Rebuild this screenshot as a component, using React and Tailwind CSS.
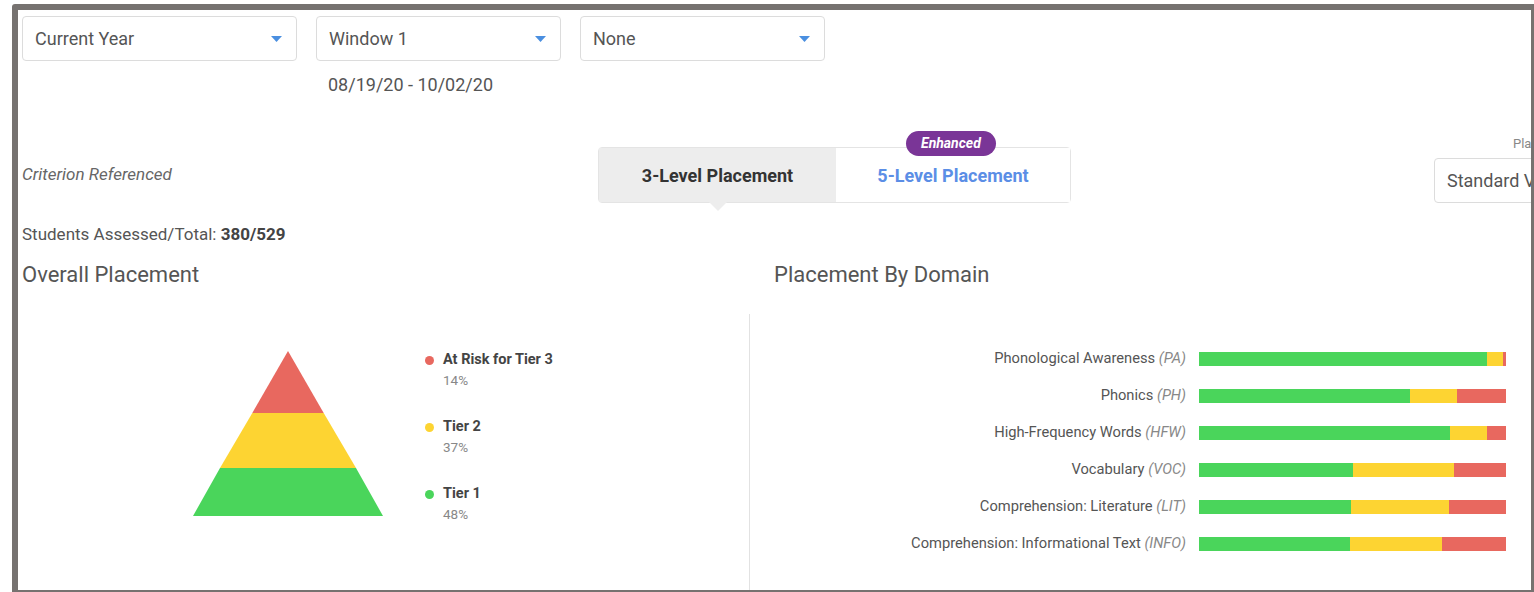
const DOMAINS = [
  { name: 'Phonological Awareness', code: 'PA', tiers: [93.8, 5.2, 1.0] },
  { name: 'Phonics', code: 'PH', tiers: [68.7, 15.3, 16.0] },
  { name: 'High-Frequency Words', code: 'HFW', tiers: [81.8, 12.0, 6.2] },
  { name: 'Vocabulary', code: 'VOC', tiers: [50.2, 32.9, 16.9] },
  { name: 'Comprehension: Literature', code: 'LIT', tiers: [49.5, 32.0, 18.5] },
  { name: 'Comprehension: Informational Text', code: 'INFO', tiers: [49.2, 30.0, 20.8] },
];

const LEGEND = [
  { label: 'At Risk for Tier 3', pct: '14%', dot: 'bg-[#e8685f]' },
  { label: 'Tier 2', pct: '37%', dot: 'bg-[#fdd432]' },
  { label: 'Tier 1', pct: '48%', dot: 'bg-[#4ad55b]' },
];

const TIER_COLORS = ['bg-[#4ad55b]', 'bg-[#fdd432]', 'bg-[#e8685f]'];

function Caret() {
  return (
    <svg width="11" height="6" viewBox="0 0 11 6" className="shrink-0">
      <path d="M0 0h11L5.5 6z" fill="#4a8fe0" />
    </svg>
  );
}

function Select({ label, width }) {
  return (
    <div className={`${width} h-[45px] shrink-0 flex items-center justify-between pl-[12px] pr-[14px] border border-[#dcdcdc] rounded-[4px] bg-white`}>
      <span className="text-[18px] text-[#555]">{label}</span>
      <Caret />
    </div>
  );
}

function Pyramid() {
  // apex at top, three stacked bands
  return (
    <svg width="190" height="165" viewBox="0 0 190 165" className="shrink-0">
      <polygon points="95,0 130.7,62 59.3,62" fill="#e8685f" />
      <polygon points="59.3,62 130.7,62 163,117 27,117" fill="#fdd432" />
      <polygon points="27,117 163,117 190,165 0,165" fill="#4ad55b" />
    </svg>
  );
}

export default function App() {
  return (
    <div className="w-[1534px] h-[592px] bg-white pt-[4px] pl-[12px] overflow-hidden" style={{ fontFamily: "Roboto, 'Liberation Sans', sans-serif" }}>
      <div className="h-[588px] border-[#767270] border-l-[6px] border-t-[6px] border-r-[3px] border-b-[2px] rounded-tl-[3px] overflow-hidden bg-white">
        <div className="w-[1513px] h-full overflow-hidden pl-[4px] pt-[6px]">
          {/* filters */}
          <div className="flex gap-[19px]">
            <Select label="Current Year" width="w-[275px]" />
            <div className="flex flex-col">
              <Select label="Window 1" width="w-[245px]" />
              <span className="mt-[13px] pl-[12px] text-[18px] leading-[22px] text-[#555]">08/19/20 - 10/02/20</span>
            </div>
            <Select label="None" width="w-[245px]" />
          </div>

          {/* placement mode */}
          <div className="flex items-end mt-[40px]">
            <div className="w-[576px] h-[56px] shrink-0 flex items-center">
              <span className="italic text-[17px] text-[#666]">Criterion Referenced</span>
            </div>
            <div className="relative flex w-[473px] h-[56px] shrink-0 border border-[#e4e4e4] rounded-[4px]">
              <div className="relative w-[237px] h-full bg-[#ededed] flex items-center justify-center">
                <span className="font-bold text-[18px] text-[#333]">3-Level Placement</span>
                <div className="absolute left-1/2 -translate-x-1/2 top-full w-0 h-0 border-l-[9px] border-r-[9px] border-t-[9px] border-l-transparent border-r-transparent border-t-[#ededed]" />
              </div>
              <div className="flex-1 h-full bg-white flex items-center justify-center">
                <span className="font-bold text-[18px] text-[#5b8ee6]">5-Level Placement</span>
              </div>
              <span className="absolute left-[307px] -top-[17px] h-[25px] px-[15px] rounded-full bg-[#7a3597] text-white text-[14px] font-bold italic flex items-center">Enhanced</span>
            </div>
            <div className="ml-[363px] w-[200px] shrink-0 flex flex-col">
              <span className="pl-[79px] text-[13px] leading-[16px] text-[#888] whitespace-nowrap">Placement Scale</span>
              <div className="mt-[6px] h-[45px] border border-[#dcdcdc] rounded-[4px] flex items-center pl-[12px]">
                <span className="text-[18px] text-[#555] whitespace-nowrap">Standard View</span>
              </div>
            </div>
          </div>

          <div className="mt-[21px] text-[17px] leading-[20px] text-[#555]">
            Students Assessed/Total: <span className="font-bold text-[#444]">380/529</span>
          </div>

          <div className="flex mt-[17px] -ml-[4px]">
            {/* overall */}
            <div className="w-[731px] shrink-0">
              <h2 className="pl-[4px] text-[22px] leading-[28px] text-[#555]">Overall Placement</h2>
              <div className="mt-[25px] pt-[37px] pl-[175px] flex">
                <Pyramid />
                <div className="ml-[42px] -mt-px flex flex-col gap-[27px]">
                  {LEGEND.map((item) => (
                    <div key={item.label} className="flex">
                      <span className={`${item.dot} w-[9px] h-[9px] rounded-full mt-[6px] mr-[9px]`} />
                      <div className="flex flex-col">
                        <span className="text-[14.5px] leading-[20px] font-bold text-[#444]">{item.label}</span>
                        <span className="text-[13.5px] leading-[20px] text-[#888]">{item.pct}</span>
                      </div>
                    </div>
                  ))}
                </div>
              </div>
            </div>

            {/* by domain */}
            <div className="flex-1 min-w-0">
              <h2 className="pl-[25px] text-[22px] leading-[28px] text-[#555]">Placement By Domain</h2>
              <div className="mt-[25px] h-[300px] border-l border-[#e2e2e2] pt-[26px] pr-[25px]">
                {DOMAINS.map((d) => (
                  <div key={d.code} className="flex items-center h-[37px]">
                    <span className="flex-1 text-right pr-[13px] text-[14.7px] text-[#555] whitespace-nowrap">
                      {d.name} <span className="italic text-[#888]">({d.code})</span>
                    </span>
                    <div className="w-[307px] h-[14px] flex shrink-0">
                      {d.tiers.map((w, i) => (
                        <div key={i} className={`${TIER_COLORS[i]} h-full`} style={{ width: `${w}%` }} />
                      ))}
                    </div>
                  </div>
                ))}
              </div>
            </div>
          </div>
        </div>
      </div>
    </div>
  );
}
